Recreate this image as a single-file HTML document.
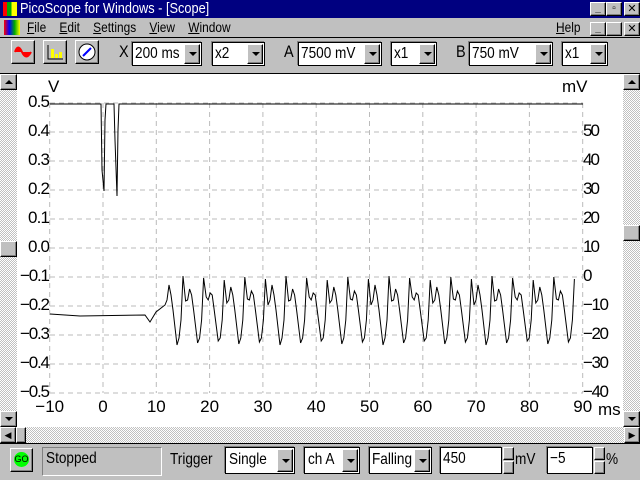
<!DOCTYPE html>
<html><head><style>
*{margin:0;padding:0;box-sizing:border-box}
body{width:640px;height:480px;position:relative;overflow:hidden;background:#c0c0c0;font-family:"Liberation Sans",sans-serif}
.a{position:absolute}
.t{font-size:15px;transform:scaleX(.85);transform-origin:left center;white-space:nowrap}
.btn{background:#c0c0c0;border:1px solid;border-color:#fff #000 #000 #fff;box-shadow:inset -1px -1px #808080}
.box{background:#fff;border:1px solid #000;box-shadow:-1px -1px #808080}
.dd{position:absolute;top:1px;right:1px;width:16px;bottom:1px}
.arr{position:absolute;left:4px;top:50%;margin-top:-2px;width:0;height:0;border-left:4px solid transparent;border-right:4px solid transparent;border-top:4px solid #000}
.hatch{background:repeating-conic-gradient(#c0c0c0 0 25%,#fff 0 50%) 0 0/2px 2px}
</style></head><body>
<div class="a" style="left:0;top:0;width:640px;height:18px;background:#000080"></div>
<div class="a" style="left:3px;top:2px;width:14px;height:14px;background:linear-gradient(90deg,#f00 0 30%,#0a0 30% 60%,#ff0 60%)"></div>
<div class="a t" style="left:20px;top:0;color:#fff;line-height:18px;font-size:15px">PicoScope for Windows - [Scope]</div>
<div class="a btn" style="left:590px;top:2px;width:16px;height:14px;font-size:10px;text-align:center;font-weight:bold">_</div>
<div class="a btn" style="left:606px;top:2px;width:16px;height:14px;font-size:10px;text-align:center">▫</div>
<div class="a btn" style="left:624px;top:2px;width:16px;height:14px;font-size:11px;text-align:center;line-height:12px">✕</div>
<div class="a" style="left:4px;top:20px;width:16px;height:15px;background:linear-gradient(90deg,#f00,#00f,#0a0,#ff0)"></div>
<div class="a t" style="left:27px;top:19px;font-size:14px;line-height:17px"><u>F</u>ile &nbsp;&nbsp; <u>E</u>dit &nbsp;&nbsp; <u>S</u>ettings &nbsp;&nbsp; <u>V</u>iew &nbsp;&nbsp; <u>W</u>indow</div>
<div class="a t" style="left:556px;top:19px;font-size:14px;line-height:17px"><u>H</u>elp</div>
<div class="a btn" style="left:590px;top:22px;width:16px;height:14px;font-size:10px;text-align:center;font-weight:bold">_</div>
<div class="a btn" style="left:606px;top:22px;width:16px;height:14px"></div>
<div class="a btn" style="left:624px;top:22px;width:16px;height:14px;font-size:11px;text-align:center;line-height:12px">✕</div>
<div class="a" style="left:0;top:37px;width:640px;height:37px;border-top:1px solid #000;border-bottom:1px solid #000"></div>
<div class="a btn" style="left:11px;top:40px;width:24px;height:24px"><svg width="22" height="22"><path d="M3 11 Q6 2 10 11 Q14 20 19 11" fill="#f00" stroke="#f00" stroke-width="2"/></svg></div>
<div class="a btn" style="left:43px;top:40px;width:24px;height:24px"><svg width="22" height="22"><path d="M4 4V18H19" stroke="#000" fill="none"/><rect x="7" y="8" width="3" height="9" fill="#ff0"/><rect x="11" y="13" width="3" height="4" fill="#ff0"/><rect x="15" y="11" width="3" height="6" fill="#ff0"/></svg></div>
<div class="a btn" style="left:75px;top:40px;width:24px;height:24px"><svg width="22" height="22"><circle cx="11" cy="11" r="8" fill="#fff" stroke="#000"/><path d="M7 15L15 7" stroke="#00f" stroke-width="2"/></svg></div>
<div class="a t" style="left:119px;top:42px;font-size:17px">X</div>
<div class="a box" style="left:132px;top:42px;width:70px;height:24px"><span class="a t" style="left:2px;top:2px;font-size:16px">200 ms</span><div class="dd btn"><div class="arr"></div></div></div>
<div class="a box" style="left:212px;top:42px;width:53px;height:24px"><span class="a t" style="left:2px;top:2px;font-size:16px">x2</span><div class="dd btn"><div class="arr"></div></div></div>
<div class="a t" style="left:284px;top:42px;font-size:17px">A</div>
<div class="a box" style="left:298px;top:42px;width:84px;height:24px"><span class="a t" style="left:2px;top:2px;font-size:16px">7500 mV</span><div class="dd btn"><div class="arr"></div></div></div>
<div class="a box" style="left:391px;top:42px;width:46px;height:24px"><span class="a t" style="left:2px;top:2px;font-size:16px">x1</span><div class="dd btn"><div class="arr"></div></div></div>
<div class="a t" style="left:456px;top:42px;font-size:17px">B</div>
<div class="a box" style="left:469px;top:42px;width:84px;height:24px"><span class="a t" style="left:2px;top:2px;font-size:16px">750 mV</span><div class="dd btn"><div class="arr"></div></div></div>
<div class="a box" style="left:562px;top:42px;width:46px;height:24px"><span class="a t" style="left:2px;top:2px;font-size:16px">x1</span><div class="dd btn"><div class="arr"></div></div></div>
<div class="a hatch" style="left:0;top:74px;width:17px;height:353px"></div>
<div class="a btn" style="left:0;top:74px;width:17px;height:16px"><div class="arr" style="border-top:none;border-bottom:4px solid #000;left:4px"></div></div>
<div class="a btn" style="left:0;top:241px;width:17px;height:16px"></div>
<div class="a btn" style="left:0;top:411px;width:17px;height:16px"><div class="arr"></div></div>
<div class="a hatch" style="left:623px;top:74px;width:17px;height:353px"></div>
<div class="a btn" style="left:623px;top:74px;width:17px;height:16px"><div class="arr" style="border-top:none;border-bottom:4px solid #000"></div></div>
<div class="a btn" style="left:623px;top:225px;width:17px;height:16px"></div>
<div class="a btn" style="left:623px;top:411px;width:17px;height:16px"><div class="arr"></div></div>
<div class="a hatch" style="left:0;top:427px;width:640px;height:16px"></div>
<div class="a btn" style="left:0;top:427px;width:16px;height:16px;font-size:9px;line-height:14px;text-align:center">◀</div>
<div class="a btn" style="left:16px;top:427px;width:10px;height:16px"></div>
<div class="a btn" style="left:624px;top:427px;width:16px;height:16px;font-size:9px;line-height:14px;text-align:center">▶</div>
<div class="a" style="left:17px;top:74px;width:606px;height:353px;background:#fff"></div>
<svg class="a" style="left:0;top:0" width="640" height="480" id="pl" font-family="Liberation Sans,sans-serif" font-size="17"></svg>
<div class="a" style="left:0;top:443px;width:640px;height:37px;border-top:1px solid #000"></div>
<div class="a btn" style="left:10px;top:448px;width:23px;height:24px"><div class="a" style="left:3px;top:3px;width:15px;height:15px;border-radius:50%;background:#0f0;font-size:9px;text-align:center;line-height:15px">GO</div></div>
<div class="a" style="left:42px;top:447px;width:120px;height:29px;border:1px solid;border-color:#808080 #fff #fff #808080"><span class="a t" style="left:3px;top:2px;font-size:16px">Stopped</span></div>
<div class="a t" style="left:170px;top:451px;font-size:16px">Trigger</div>
<div class="a box" style="left:225px;top:447px;width:70px;height:27px"><span class="a t" style="left:3px;top:3px;font-size:16px">Single</span><div class="dd btn"><div class="arr"></div></div></div>
<div class="a box" style="left:304px;top:447px;width:56px;height:27px"><span class="a t" style="left:3px;top:3px;font-size:16px">ch A</span><div class="dd btn"><div class="arr"></div></div></div>
<div class="a box" style="left:369px;top:447px;width:63px;height:27px"><span class="a t" style="left:2px;top:3px;font-size:16px">Falling</span><div class="dd btn"><div class="arr"></div></div></div>
<div class="a box" style="left:440px;top:447px;width:62px;height:27px"><span class="a t" style="left:2px;top:2px;font-size:16px">450</span></div>
<div class="a btn" style="left:503px;top:447px;width:11px;height:13px"></div>
<div class="a btn" style="left:503px;top:461px;width:11px;height:13px"></div>
<div class="a t" style="left:515px;top:451px;font-size:16px">mV</div>
<div class="a box" style="left:547px;top:447px;width:46px;height:27px"><span class="a t" style="left:2px;top:2px;font-size:16px">−5</span></div>
<div class="a btn" style="left:594px;top:447px;width:11px;height:13px"></div>
<div class="a btn" style="left:594px;top:461px;width:11px;height:13px"></div>
<div class="a t" style="left:606px;top:451px;font-size:16px">%</div>
<script>
var s=document.getElementById('pl'),h='';
function X(t){return 103+t*5.33}function Y(v){return 103+(0.5-v)*290}
for(var i=0;i<=10;i++){var x=X(-10+i*10);h+='<line x1="'+x+'" y1="103" x2="'+x+'" y2="393" stroke="#bbb" stroke-dasharray="5,4"/>';}
for(i=0;i<=10;i++){var v=0.5-i*0.1,y=Y(v);h+='<line x1="50" y1="'+y+'" x2="583" y2="'+y+'" stroke="#bbb" stroke-dasharray="5,4"/>';
var l=(Math.abs(v)<1e-9?'0.0':(v<0?'−':'')+Math.abs(v).toFixed(1));
h+='<text x="50" y="'+(y+4)+'" text-anchor="end" textLength="'+(v<0?30:22)+'">'+l+'</text>';
if(i>0){var m=60-i*10;h+='<text x="583" y="'+(y+4)+'" textLength="'+(m<0?26:17)+'">'+(m<0?'−'+(-m):m)+'</text>';}}
for(i=0;i<=10;i++){var t=-10+i*10;h+='<text x="'+X(t)+'" y="412" text-anchor="middle">'+(t<0?'−10':t)+'</text>';}
h+='<text x="48" y="92">V</text><text x="562" y="92">mV</text><text x="598" y="415">ms</text>';
var a='M50 104L101 104L102 170L104 191L105 120L106 104L114 104L115 140L117 196L118 130L119 104L583 104';
h+='<path d="'+a+'" fill="none" stroke="#000"/>';
var b='M50 314L80 316L145 315L150 322L156 312';var P=20.6,x0=163;
for(var k=0;k<20;k++){var o=x0+k*P;var r=((k*7)%5)*2;
b+='L'+(o+2)+' '+(305-r)+'L'+(o+4)+' '+(300)+'L'+(o+6)+' '+(285+r)+'L'+(o+8)+' '+(295)+'L'+(o+10)+' '+(310)+'L'+(o+14)+' '+(345-r/2)+'L'+(o+16)+' '+(338)+'L'+(o+18)+' '+(320)+'L'+(o+20)+' '+(276+r/2);}
h+='<path d="'+b+'" fill="none" stroke="#000"/>';
s.innerHTML=h;
</script>
</body></html>
